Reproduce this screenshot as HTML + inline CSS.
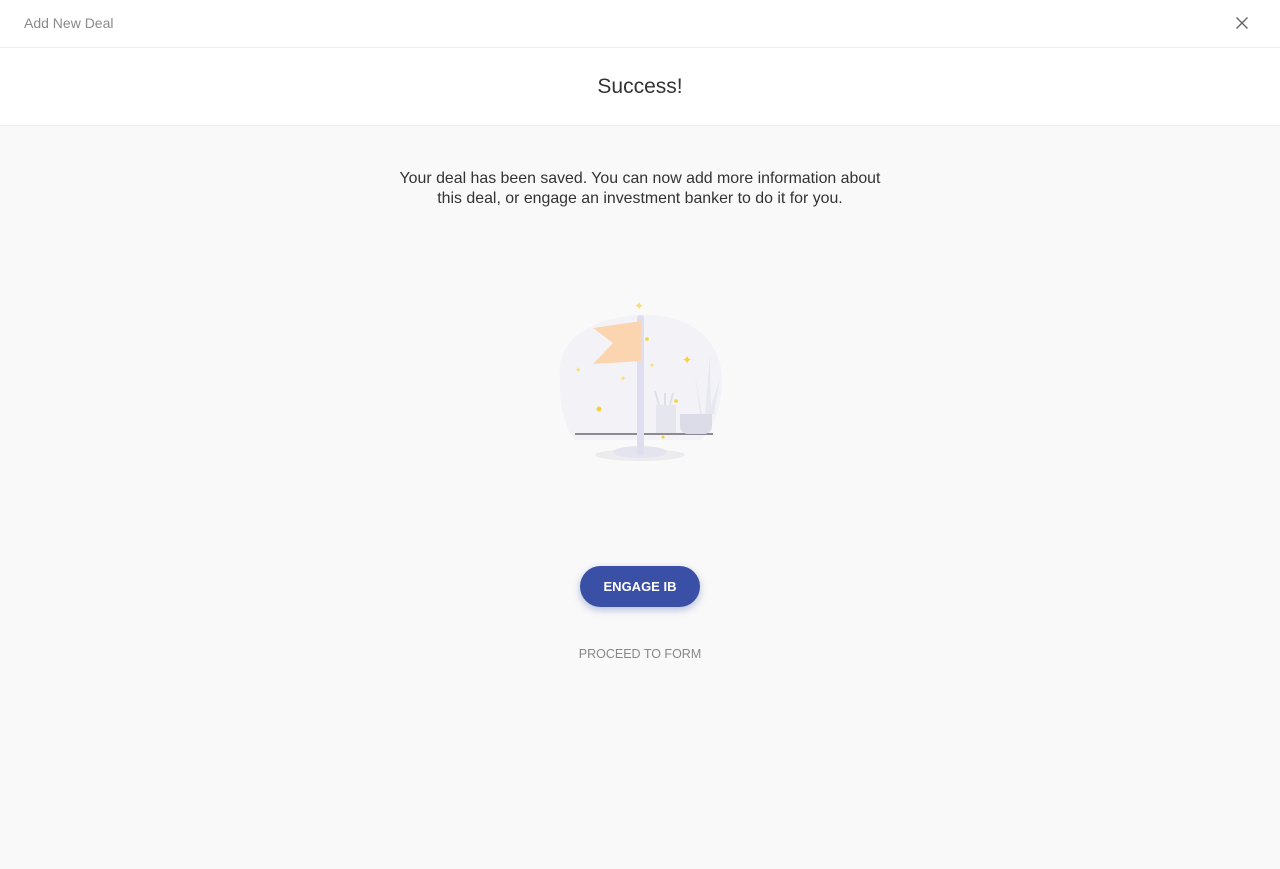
<!DOCTYPE html>
<html><head><style>
body{margin:0;width:1280px;height:869px;background:#f9f9f9;font-family:"Liberation Sans",sans-serif;position:relative;overflow:hidden}
.top{position:absolute;left:0;top:0;width:1280px;height:47px;background:#fff;border-bottom:1px solid #eee}
.top span{position:absolute;left:24px;top:15px;font-size:14px;color:#8a8a8a}
.close{position:absolute;left:1235px;top:16px}
.hdr{position:absolute;left:0;top:48px;width:1280px;height:77px;background:#fff;border-bottom:1px solid #eee;text-align:center}
.hdr h1{margin:0;font-weight:normal;font-size:21px;color:#333;line-height:77px}
.msg{position:absolute;top:169px;left:0;width:1280px;text-align:center;font-size:15.9px;line-height:20px;color:#333}
.btn{position:absolute;left:580px;top:566px;width:120px;height:41px;border-radius:21px;background:#3a4fa6;color:#fff;font-weight:bold;font-size:13px;text-align:center;line-height:41px;box-shadow:0 3px 8px rgba(58,79,166,.35)}
.link{position:absolute;top:647px;left:0;width:1280px;text-align:center;font-size:12.5px;color:#888}
</style></head><body>
<div class="top"><span>Add New Deal</span>
<svg class="close" width="14" height="14" viewBox="0 0 14 14"><path d="M1.5 1.5L12.5 12.5M12.5 1.5L1.5 12.5" stroke="#666" stroke-width="1.4"/></svg></div>
<div class="hdr"><h1>Success!</h1></div>
<div class="msg">Your deal has been saved. You can now add more information about<br>this deal, or engage an investment banker to do it for you.</div>
<svg style="position:absolute;left:0;top:0" width="1280" height="869">
<path d="M560 380C555 340 590 318 640 315C690 313 722 340 722 380C722 410 712 430 700 440L575 440C562 425 560 400 560 380Z" fill="#f3f3f7"/>
<ellipse cx="640" cy="455" rx="45" ry="6" fill="#ececef"/>
<line x1="575" y1="434" x2="713" y2="434" stroke="#8a8a90" stroke-width="2"/>
<path d="M656 405h20v28h-20z" fill="#e6e6ee"/>
<path d="M659 405l-4-14M665 405l0-12M670 405l3-12" stroke="#dedee8" stroke-width="2"/>
<path d="M700 414l-5-40 7 40M705 414l5-60 1 60M708 414l12-35-6 35" fill="#e8e8f0"/>
<path d="M680 414h32v12c0 5-4 8-8 8h-16c-4 0-8-3-8-8z" fill="#dcdce8"/>
<ellipse cx="640" cy="452" rx="27" ry="6" fill="#e4e4ee"/>
<rect x="637" y="315" width="7" height="140" rx="3" fill="#dedef0"/>
<path d="M593 328L641 321L641 361L593 364L613 343Z" fill="#fbd5b0"/>
<g fill="#f5d23a"><circle cx="599" cy="409" r="2.5"/><circle cx="647" cy="339" r="1.8"/><circle cx="676" cy="401" r="1.8"/><circle cx="663" cy="437" r="1.5"/></g>
<g fill="#f7e07a" font-size="12" font-family="DejaVu Sans" text-anchor="middle"><text x="639" y="310">✦</text><text x="578" y="373" font-size="9">✦</text><text x="623" y="381" font-size="8">✦</text><text x="652" y="368" font-size="8">✦</text><text x="687" y="364" fill="#f5d23a">✦</text></g>
</svg>
<div class="btn">ENGAGE IB</div>
<div class="link">PROCEED TO FORM</div>
</body></html>
